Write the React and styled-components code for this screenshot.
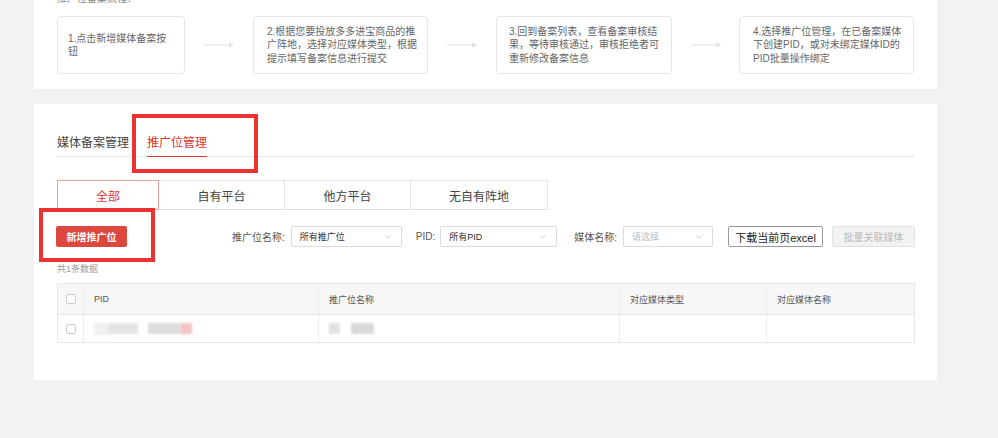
import React from 'react'
import styled, {createGlobalStyle} from 'styled-components'
import {ChevronDown} from 'lucide-react'

const GlobalStyle = createGlobalStyle`
  html, body {
    margin: 0;
    padding: 0;
    background: #f2f2f2;
  }
  body {
    font-family: "Liberation Sans", "Noto Sans CJK SC", sans-serif;
    color: #333;
  }
`

const Page = styled.div`
  width: 903px;
  margin-left: 34px;
  height: 438px;
`

const Card = styled.div`
  position: relative;
  background: #fff;
  padding: 0 22px 0 23px;
`

const GuideCard = styled(Card)`
  display: flex;
  flex-direction: column;
  padding-bottom: 15px;
`

const GuideTitle = styled.div`
  margin-top: -7px;
  font-size: 10px;
  line-height: 12px;
  color: #888;
`

const Steps = styled.div`
  display: flex;
  align-items: center;
  margin-top: 11px;
`

const StepBox = styled.div`
  box-sizing: border-box;
  width: ${p => p.w}px;
  height: 58px;
  border: 1px solid #e6e6e6;
  border-radius: 4px;
  padding: 0 8px 0 ${p => p.pl || 12}px;
  display: flex;
  align-items: center;
  font-size: 10px;
  line-height: 13.5px;
  color: #666;
`

const Connector = styled.div`
  width: ${p => p.w}px;
  display: flex;
  justify-content: center;
`

const MainCard = styled(Card)`
  margin-top: 15px;
  padding-top: 26px;
  padding-bottom: 37px;
`

const TabBar = styled.div`
  display: flex;
  gap: 18px;
  border-bottom: 1px solid #ececec;
`

const Tab = styled.div`
  font-size: 12px;
  line-height: 26px;
  color: ${p => p.active ? '#e0322b' : '#444'};
  border-bottom: 1px solid ${p => p.active ? '#e0322b' : 'transparent'};
  margin-bottom: -1px;
`

const Segments = styled.div`
  display: flex;
  margin-top: 23px;
`

const Segment = styled.div`
  box-sizing: border-box;
  width: ${p => p.w}px;
  height: 30px;
  margin-left: ${p => p.first ? 0 : -1}px;
  border: 1px solid ${p => p.active ? '#eaa29c' : '#e2e2e2'};
  position: relative;
  z-index: ${p => p.active ? 1 : 0};
  display: flex;
  align-items: center;
  justify-content: center;
  font-size: 12px;
  color: ${p => p.active ? '#e0372c' : '#444'};
  background: #fff;
`

const Toolbar = styled.div`
  display: flex;
  align-items: center;
  margin-top: 16px;
  height: 21px;
`

const PrimaryButton = styled.div`
  width: 71px;
  height: 21px;
  margin-left: -1px;
  border-radius: 2px;
  background: #dd483e;
  color: #fff;
  font-size: 10px;
  font-weight: bold;
  display: flex;
  align-items: center;
  justify-content: center;
`

const Filters = styled.div`
  margin-left: auto;
  display: flex;
  align-items: center;
`

const Label = styled.span`
  font-size: 10px;
  color: #555;
  margin: 0 ${p => p.gap || 6}px 0 ${p => p.ml || 0}px;
`

const Select = styled.div`
  box-sizing: border-box;
  width: ${p => p.w}px;
  height: 21px;
  border: 1px solid #dcdcdc;
  border-radius: 2px;
  padding: 0 8px 0 8px;
  display: flex;
  align-items: center;
  justify-content: space-between;
  font-size: 9px;
  color: ${p => p.placeholder ? '#bbb' : '#333'};
`

const OutlineButton = styled.div`
  box-sizing: border-box;
  width: 95px;
  height: 21px;
  margin-left: 15px;
  border: 1px solid #999;
  border-radius: 2px;
  display: flex;
  align-items: center;
  justify-content: center;
  font-size: 11px;
  color: #222;
`

const DisabledButton = styled.div`
  box-sizing: border-box;
  width: 83px;
  height: 21px;
  margin-left: 9px;
  border: 1px solid #e2e2e2;
  border-radius: 2px;
  background: #f2f2f2;
  display: flex;
  align-items: center;
  justify-content: center;
  font-size: 10px;
  color: #bbb;
`

const Count = styled.div`
  margin-top: 16px;
  font-size: 9px;
  line-height: 12px;
  color: #999;
`

const Table = styled.div`
  margin-top: 8px;
  border: 1px solid #e8e8e8;
  border-bottom: none;
`

const Row = styled.div`
  display: grid;
  grid-template-columns: 26px 235px 301px 147px 147px;
  height: ${p => p.head ? 30 : 27}px;
  background: ${p => p.head ? '#f7f7f7' : '#fff'};
  border-bottom: 1px solid #e8e8e8;
`

const Cell = styled.div`
  display: flex;
  align-items: center;
  justify-content: ${p => p.center ? 'center' : 'flex-start'};
  padding-left: ${p => p.center ? 0 : 10}px;
  border-right: ${p => p.last ? 'none' : '1px solid #ececec'};
  font-size: 9px;
  color: #555;
`

const Checkbox = styled.span`
  box-sizing: border-box;
  width: 10px;
  height: 10px;
  border: 1px solid #ccc;
  border-radius: 2px;
  background: #fff;
`

const Blur = styled.span`
  width: ${p => p.w}px;
  height: ${p => p.h || 11}px;
  background: ${p => p.c || '#dcdcdc'};
  filter: blur(1px);
  margin-left: ${p => p.ml || 0}px;
`

const Highlight = styled.div`
  position: absolute;
  left: ${p => p.x}px;
  top: ${p => p.y}px;
  width: ${p => p.w}px;
  height: ${p => p.h}px;
  box-sizing: border-box;
  border: 4px solid #ec3233;
  pointer-events: none;
  z-index: 5;
`

function Arrow() {
  return (
    <svg width="30" height="6" viewBox="0 0 30 6">
      <line x1="0" y1="3" x2="26" y2="3" stroke="#e0e0e0" strokeWidth="1" />
      <path d="M25 0.5 L30 3 L25 5.5 Z" fill="#e0e0e0" />
    </svg>
  )
}

const steps = [
  {w: 128, pl: 10, text: '1.点击新增媒体备案按钮'},
  {w: 175, pl: 13, text: '2.根据您要投放多多进宝商品的推广阵地，选择对应媒体类型，根据提示填写备案信息进行提交'},
  {w: 176, pl: 12, text: '3.回到备案列表，查看备案审核结果，等待审核通过，审核拒绝者可重新修改备案信息'},
  {w: 175, pl: 13, text: '4.选择推广位管理，在已备案媒体下创建PID，或对未绑定媒体ID的PID批量操作绑定'},
]

const segments = [
  {w: 102, label: '全部', active: true},
  {w: 127, label: '自有平台'},
  {w: 127, label: '他方平台'},
  {w: 138, label: '无自有阵地'},
]

export default function App() {
  return (
    <Page>
      <GlobalStyle />
      <GuideCard>
        <GuideTitle>推广位备案流程：</GuideTitle>
        <Steps>
          {steps.map((s, i) => (
            <React.Fragment key={i}>
              {i > 0 && <Connector w={i === 3 ? 67 : 68}><Arrow /></Connector>}
              <StepBox w={s.w} pl={s.pl}>{s.text}</StepBox>
            </React.Fragment>
          ))}
        </Steps>
      </GuideCard>

      <MainCard>
        <TabBar>
          <Tab>媒体备案管理</Tab>
          <Tab active>推广位管理</Tab>
        </TabBar>

        <Segments>
          {segments.map((s, i) => (
            <Segment key={s.label} w={s.w} first={i === 0} active={s.active}>{s.label}</Segment>
          ))}
        </Segments>

        <Toolbar>
          <PrimaryButton>新增推广位</PrimaryButton>
          <Filters>
            <Label>推广位名称:</Label>
            <Select w={111}>所有推广位<ChevronDown size={10} color="#c8c8c8" /></Select>
            <Label ml={14} gap={5}>PID:</Label>
            <Select w={117}>所有PID<ChevronDown size={10} color="#c8c8c8" /></Select>
            <Label ml={17}>媒体名称:</Label>
            <Select w={90} placeholder>请选择<ChevronDown size={10} color="#c8c8c8" /></Select>
            <OutlineButton>下载当前页excel</OutlineButton>
            <DisabledButton>批量关联媒体</DisabledButton>
          </Filters>
        </Toolbar>

        <Count>共1条数据</Count>

        <Table>
          <Row head>
            <Cell center><Checkbox /></Cell>
            <Cell>PID</Cell>
            <Cell>推广位名称</Cell>
            <Cell>对应媒体类型</Cell>
            <Cell last>对应媒体名称</Cell>
          </Row>
          <Row>
            <Cell center><Checkbox /></Cell>
            <Cell>
              <Blur w={14} h={12} c="#f0f0f0" />
              <Blur w={30} c="#e4e4e4" />
              <Blur w={32} ml={10} c="#dcdcdc" />
              <Blur w={12} c="#f3c6c6" />
            </Cell>
            <Cell>
              <Blur w={11} c="#e2e2e2" />
              <Blur w={23} ml={11} c="#d9d9d9" />
            </Cell>
            <Cell />
            <Cell last />
          </Row>
        </Table>

        <Highlight x={98} y={10} w={126} h={59} />
        <Highlight x={5} y={104} w={116} h={54} />
      </MainCard>
    </Page>
  )
}
